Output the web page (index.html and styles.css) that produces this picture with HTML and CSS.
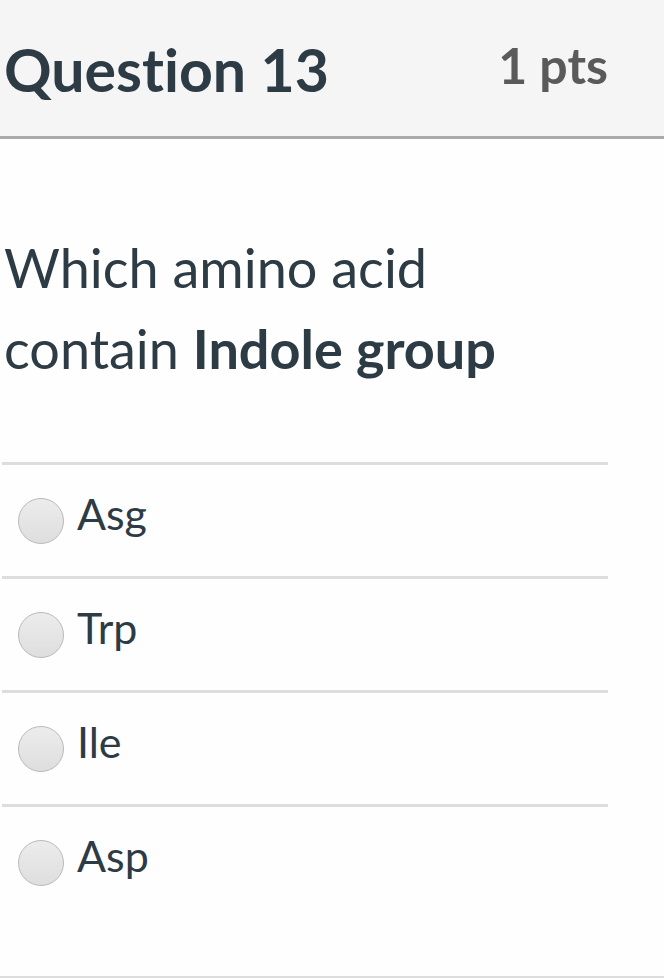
FILE: index.html
```html
<!DOCTYPE html>
<html lang="en">
<head>
<meta charset="utf-8">
<title>Question 13</title>
<link rel="stylesheet" href="styles.css">
</head>
<body>
<div class="question">
  <div class="header">
    <div class="title">Question 13</div>
    <div class="pts">1 pts</div>
  </div>
  <div class="text">Which amino acid<br>contain <strong>Indole group</strong></div>
  <div class="answers">
    <label class="answer"><span class="radio"></span><span class="label">Asg</span></label>
    <label class="answer"><span class="radio"></span><span class="label">Trp</span></label>
    <label class="answer"><span class="radio"></span><span class="label">Ile</span></label>
    <label class="answer"><span class="radio"></span><span class="label">Asp</span></label>
  </div>
  <div class="footer-line"></div>
</div>
</body>
</html>
```
FILE: styles.css
```css
html, body {
  margin: 0;
  padding: 0;
  background: #fefefe;
}
body {
  font-family: Lato, "Open Sans", sans-serif;
  color: #2d3b45;
  font-variant-ligatures: none;
}
.header {
  height: 136px;
  background: #f5f5f5;
  border-bottom: 3px solid #aaaaaa;
  display: flex;
  justify-content: space-between;
  align-items: center;
  padding: 0 56px 0 4px;
}
.title {
  font-size: 59px;
  font-weight: 700;
  color: #2d3b45;
  margin-top: 2px;
}
.pts {
  font-size: 50px;
  font-weight: 700;
  color: #5a5a5a;
  margin-top: -6px;
}
.text {
  margin: 88px 0 0 4px;
  font-size: 54px;
  line-height: 81px;
}
.text strong {
  font-weight: 700;
}
.answers {
  margin: 73px 56px 0 2px;
}
.answer {
  display: flex;
  align-items: center;
  height: 111px;
  border-top: 3px solid #dddddd;
  padding-left: 16px;
}
.radio {
  width: 44px;
  height: 44px;
  border-radius: 50%;
  border: 1px solid #b9b9b9;
  background: linear-gradient(#ececec, #dedede);
  flex: none;
}
.label {
  margin-left: 13px;
  font-size: 43px;
  margin-bottom: 14px;
}
.footer-line {
  margin-top: 58px;
  border-top: 2px solid #dddddd;
}
```
